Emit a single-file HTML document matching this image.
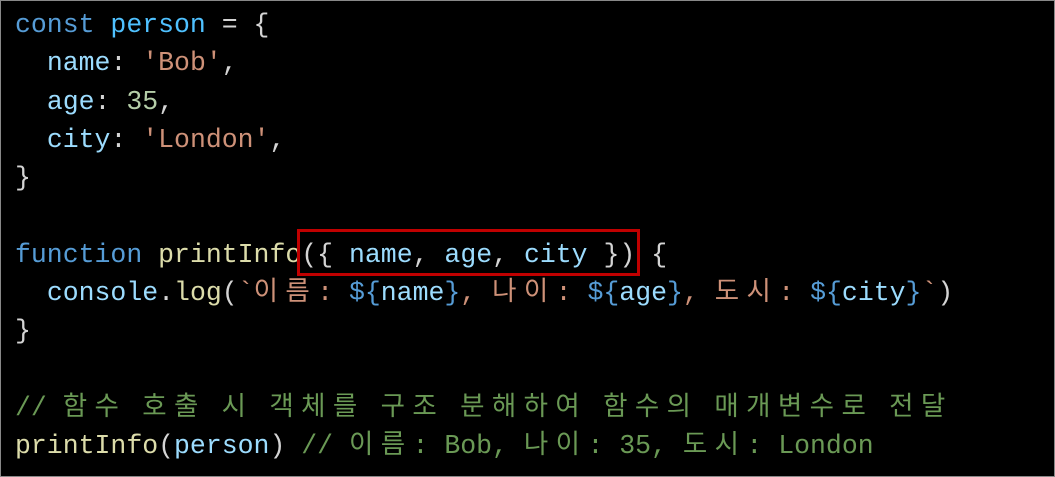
<!DOCTYPE html>
<html><head><meta charset="utf-8"><style>
html,body{margin:0;padding:0;background:#000;}
.wrap{position:relative;width:1053px;height:475px;border:1px solid #888;background:#000;overflow:hidden;}
.code{position:absolute;left:14px;top:5px;font-family:"Liberation Mono","Noto Sans CJK KR",monospace;font-size:26.5px;color:#d4d4d4;}
.code div{height:38.3px;line-height:38.3px;white-space:pre;}
.k{color:#569cd6}.c{color:#4fc1ff}.v{color:#9cdcfe}.f{color:#dcdcaa}.s{color:#ce9178}.n{color:#b5cea8}.m{color:#6a9955}
.h{letter-spacing:7.4px;font-family:"Noto Sans CJK KR",sans-serif;line-height:1;}
.box{position:absolute;left:296px;top:228px;width:337px;height:41px;border:3px solid #c00000;}
</style></head><body><div class="wrap">
<div class="code">
<div><span class="k">const</span> <span class="c">person</span> = {</div>
<div>  <span class="v">name</span>: <span class="s">'Bob'</span>,</div>
<div>  <span class="v">age</span>: <span class="n">35</span>,</div>
<div>  <span class="v">city</span>: <span class="s">'London'</span>,</div>
<div>}</div>
<div> </div>
<div><span class="k">function</span> <span class="f">printInfo</span>({ <span class="v">name</span>, <span class="v">age</span>, <span class="v">city</span> }) {</div>
<div>  <span class="v">console</span>.<span class="f">log</span>(<span class="s">`<span class="h">이름</span>: </span><span class="k">${</span><span class="v">name</span><span class="k">}</span><span class="s">, <span class="h">나이</span>: </span><span class="k">${</span><span class="v">age</span><span class="k">}</span><span class="s">, <span class="h">도시</span>: </span><span class="k">${</span><span class="v">city</span><span class="k">}</span><span class="s">`</span>)</div>
<div>}</div>
<div> </div>
<div><span class="m">// <span class="h">함수</span> <span class="h">호출</span> <span class="h">시</span> <span class="h">객체를</span> <span class="h">구조</span> <span class="h">분해하여</span> <span class="h">함수의</span> <span class="h">매개변수로</span> <span class="h">전달</span></span></div>
<div><span class="f">printInfo</span>(<span class="v">person</span>) <span class="m">// <span class="h">이름</span>: Bob, <span class="h">나이</span>: 35, <span class="h">도시</span>: London</span></div>
</div>
<div class="box"></div>
</div></body></html>
